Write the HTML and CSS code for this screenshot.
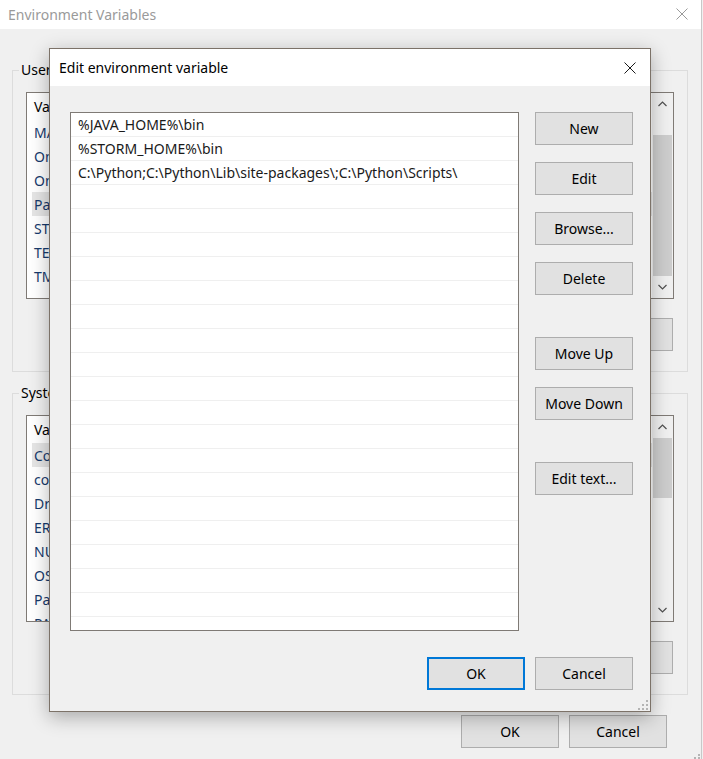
FILE: index.html
```html
<!DOCTYPE html>
<html>
<head>
  <title>Environment Variables</title>
  <link rel="stylesheet" href="styles.css">
</head>
<body>
  <div class="window">
    <div class="titlebar">
      <span class="title">Environment Variables</span>
      <svg class="close" width="12" height="12" viewBox="0 0 12 12"><path d="M0.5 0.5L11.5 11.5M11.5 0.5L0.5 11.5" stroke="#9a9a9a" stroke-width="1"/></svg>
    </div>

    <div class="window-body">
      <fieldset class="group">
        <legend>User variables for admin</legend>
        <div class="listview">
          <div class="lv-content">
            <div class="lv-header"><span class="col-var">Variable</span><span>Value</span></div>
            <div class="lv-row"><span class="col-var">MAVEN_HOME</span><span>C:\maven</span></div>
            <div class="lv-row"><span class="col-var">OneDrive</span><span>C:\Users\admin\OneDrive</span></div>
            <div class="lv-row"><span class="col-var">OneDriveConsumer</span><span>C:\Users\admin\OneDrive</span></div>
            <div class="lv-row selected"><span class="col-var">Path</span><span>%JAVA_HOME%\bin;%STORM_HOME%\bin</span></div>
            <div class="lv-row"><span class="col-var">STORM_HOME</span><span>C:\storm</span></div>
            <div class="lv-row"><span class="col-var">TEMP</span><span>%USERPROFILE%\AppData\Local\Temp</span></div>
            <div class="lv-row"><span class="col-var">TMP</span><span>%USERPROFILE%\AppData\Local\Temp</span></div>
          </div>
          <div class="scrollbar">
            <div class="sb-arrow"><svg width="9" height="6" viewBox="0 0 9 6"><path d="M0.5 5L4.5 1L8.5 5" fill="none" stroke="#505050" stroke-width="1.2"/></svg></div>
            <div class="sb-track"><div class="sb-thumb thumb-user"></div></div>
            <div class="sb-arrow"><svg width="9" height="6" viewBox="0 0 9 6"><path d="M0.5 1L4.5 5L8.5 1" fill="none" stroke="#505050" stroke-width="1.2"/></svg></div>
          </div>
        </div>
        <div class="group-buttons">
          <button>New...</button>
          <button>Edit...</button>
          <button>Delete</button>
        </div>
      </fieldset>

      <fieldset class="group group-system">
        <legend>System variables</legend>
        <div class="listview">
          <div class="lv-content">
            <div class="lv-header"><span class="col-var">Variable</span><span>Value</span></div>
            <div class="lv-row selected"><span class="col-var">ComSpec</span><span>C:\Windows\system32\cmd.exe</span></div>
            <div class="lv-row"><span class="col-var">configsetroot</span><span>C:\Windows\ConfigSetRoot</span></div>
            <div class="lv-row"><span class="col-var">DriverData</span><span>C:\Windows\System32\Drivers\DriverData</span></div>
            <div class="lv-row"><span class="col-var">ERLANG_HOME</span><span>C:\Program Files\erl</span></div>
            <div class="lv-row"><span class="col-var">NUMBER_OF_PROCESSORS</span><span>8</span></div>
            <div class="lv-row"><span class="col-var">OS</span><span>Windows_NT</span></div>
            <div class="lv-row"><span class="col-var">Path</span><span>C:\Windows\system32;C:\Windows</span></div>
            <div class="lv-row"><span class="col-var">PATHEXT</span><span>.COM;.EXE;.BAT;.CMD</span></div>
          </div>
          <div class="scrollbar">
            <div class="sb-arrow"><svg width="9" height="6" viewBox="0 0 9 6"><path d="M0.5 5L4.5 1L8.5 5" fill="none" stroke="#505050" stroke-width="1.2"/></svg></div>
            <div class="sb-track"><div class="sb-thumb thumb-system"></div></div>
            <div class="sb-arrow"><svg width="9" height="6" viewBox="0 0 9 6"><path d="M0.5 1L4.5 5L8.5 1" fill="none" stroke="#505050" stroke-width="1.2"/></svg></div>
          </div>
        </div>
        <div class="group-buttons">
          <button>New...</button>
          <button>Edit...</button>
          <button>Delete</button>
        </div>
      </fieldset>

      <div class="window-footer">
        <button>OK</button>
        <button>Cancel</button>
      </div>
    </div>
    <svg class="grip grip-window" width="6" height="5" viewBox="0 0 6 5"><rect x="4" y="0" width="2" height="2" fill="#b4b4b4"/><rect x="0" y="3" width="2" height="2" fill="#b4b4b4"/><rect x="4" y="3" width="2" height="2" fill="#b4b4b4"/></svg>
  </div>

  <div class="dialog">
    <div class="dialog-titlebar">
      <span class="dialog-title">Edit environment variable</span>
      <svg class="close" width="12" height="12" viewBox="0 0 12 12"><path d="M0.5 0.5L11.5 11.5M11.5 0.5L0.5 11.5" stroke="#1a1a1a" stroke-width="1"/></svg>
    </div>

    <div class="dialog-body">
      <div class="path-list">
        <div class="path-row">%JAVA_HOME%\bin</div>
        <div class="path-row">%STORM_HOME%\bin</div>
        <div class="path-row">C:\Python;C:\Python\Lib\site-packages\;C:\Python\Scripts\</div>
        <div class="path-row"></div>
        <div class="path-row"></div>
        <div class="path-row"></div>
        <div class="path-row"></div>
        <div class="path-row"></div>
        <div class="path-row"></div>
        <div class="path-row"></div>
        <div class="path-row"></div>
        <div class="path-row"></div>
        <div class="path-row"></div>
        <div class="path-row"></div>
        <div class="path-row"></div>
        <div class="path-row"></div>
        <div class="path-row"></div>
        <div class="path-row"></div>
        <div class="path-row"></div>
        <div class="path-row"></div>
        <div class="path-row"></div>
        <div class="path-row"></div>
      </div>

      <div class="dialog-actions">
        <button>New</button>
        <button>Edit</button>
        <button>Browse...</button>
        <button>Delete</button>
        <button class="group-start">Move Up</button>
        <button>Move Down</button>
        <button class="group-start">Edit text...</button>
      </div>
    </div>

    <div class="dialog-footer">
      <button class="default">OK</button>
      <button>Cancel</button>
    </div>
    <svg class="grip grip-dialog" width="10" height="10" viewBox="0 0 10 10"><rect x="8" y="0" width="2" height="2" fill="#b4b4b4"/><rect x="4" y="4" width="2" height="2" fill="#b4b4b4"/><rect x="8" y="4" width="2" height="2" fill="#b4b4b4"/><rect x="0" y="8" width="2" height="2" fill="#b4b4b4"/><rect x="4" y="8" width="2" height="2" fill="#b4b4b4"/><rect x="8" y="8" width="2" height="2" fill="#b4b4b4"/></svg>
  </div>
</body>
</html>
```

FILE: styles.css
```css
html, body {
  margin: 0;
  width: 703px;
  height: 759px;
  overflow: hidden;
  background-color: #f0f0f0;
  font-family: 'Noto Sans', 'Segoe UI', sans-serif;
  font-size: 14px;
  color: #000;
}

/* background window */
.window {
  position: relative;
  width: 702px;
  height: 759px;
  box-sizing: border-box;
  border-right: 1px solid #c8c8c8;
  background-color: #f0f0f0;
}
.titlebar {
  height: 29px;
  background-color: #fff;
  display: flex;
  align-items: center;
  justify-content: space-between;
  padding: 0 13px 0 8px;
  color: #9a9a9a;
}
.titlebar .close {
  margin-top: -1px;
}
.window-body {
  padding: 33px 13px 0 12px;
}
.group {
  margin: 0;
  min-width: 0;
  padding: 14px 13px 20px;
  border: 1px solid #dcdcdc;
}
.group legend {
  padding: 0 2px;
  margin-left: -7px;
  line-height: 16px;
}
.group-system {
  margin-top: 13px;
}
.listview {
  display: flex;
  height: 207px;
  box-sizing: border-box;
  border: 1px solid #7f7a75;
  background-color: #fff;
}
.lv-content {
  flex: 1;
  overflow: hidden;
  white-space: nowrap;
}
.lv-header {
  height: 27px;
  display: flex;
  align-items: center;
  padding-left: 7px;
}
.lv-row {
  height: 24px;
  display: flex;
  align-items: center;
  margin-left: 5px;
  padding-left: 2px;
  color: #173a6c;
}
.lv-row.selected {
  background-color: #e5e5e5;
}
.col-var {
  width: 190px;
  flex-shrink: 0;
}
.scrollbar {
  width: 21px;
  display: flex;
  flex-direction: column;
  background-color: #f0f0f0;
}
.sb-arrow {
  height: 22px;
  display: flex;
  align-items: center;
  justify-content: center;
}
.sb-track {
  flex: 1;
}
.sb-thumb {
  margin: 0 1px;
  background-color: #cdcdcd;
}
.thumb-user {
  margin-top: 20px;
  height: 141px;
}
.thumb-system {
  height: 60px;
}
.group-buttons {
  display: flex;
  justify-content: flex-end;
  gap: 10px;
  margin-top: 19px;
  padding-right: 1px;
}
.window-footer {
  display: flex;
  justify-content: flex-end;
  gap: 10px;
  margin-top: 20px;
  padding-right: 21px;
}

button {
  font: inherit;
  width: 98px;
  height: 33px;
  padding: 0;
  color: #000;
  background-color: #e1e1e1;
  border: 1px solid #adadad;
}
button.default {
  border: 2px solid #0078d7;
}

.grip {
  position: absolute;
}
.grip-window {
  right: 1px;
  bottom: 0;
}

/* edit dialog on top */
.dialog {
  position: absolute;
  left: 49px;
  top: 48px;
  width: 602px;
  height: 664px;
  box-sizing: border-box;
  border: 1px solid #7c7268;
  background-color: #f0f0f0;
  box-shadow: 0 5px 18px rgba(0,0,0,0.3);
}
.dialog-titlebar {
  height: 37px;
  background-color: #fff;
  display: flex;
  align-items: center;
  justify-content: space-between;
  padding: 0 14px 0 9px;
}
.dialog-body {
  display: flex;
  gap: 16px;
  padding: 26px 17px 0 20px;
}
.path-list {
  width: 449px;
  height: 519px;
  box-sizing: border-box;
  border: 1px solid #7f7a75;
  background-color: #fff;
  overflow: hidden;
}
.path-row {
  height: 24px;
  box-sizing: border-box;
  border-bottom: 1px solid #efefef;
  padding-left: 7px;
  display: flex;
  align-items: center;
  white-space: nowrap;
  color: #1a1a1a;
}
.dialog-actions {
  display: flex;
  flex-direction: column;
  gap: 17px;
}
.dialog-actions .group-start {
  margin-top: 25px;
}
.dialog-footer {
  display: flex;
  justify-content: flex-end;
  gap: 10px;
  padding: 26px 17px 0 0;
}
.grip-dialog {
  right: 2px;
  bottom: 1px;
}
```
